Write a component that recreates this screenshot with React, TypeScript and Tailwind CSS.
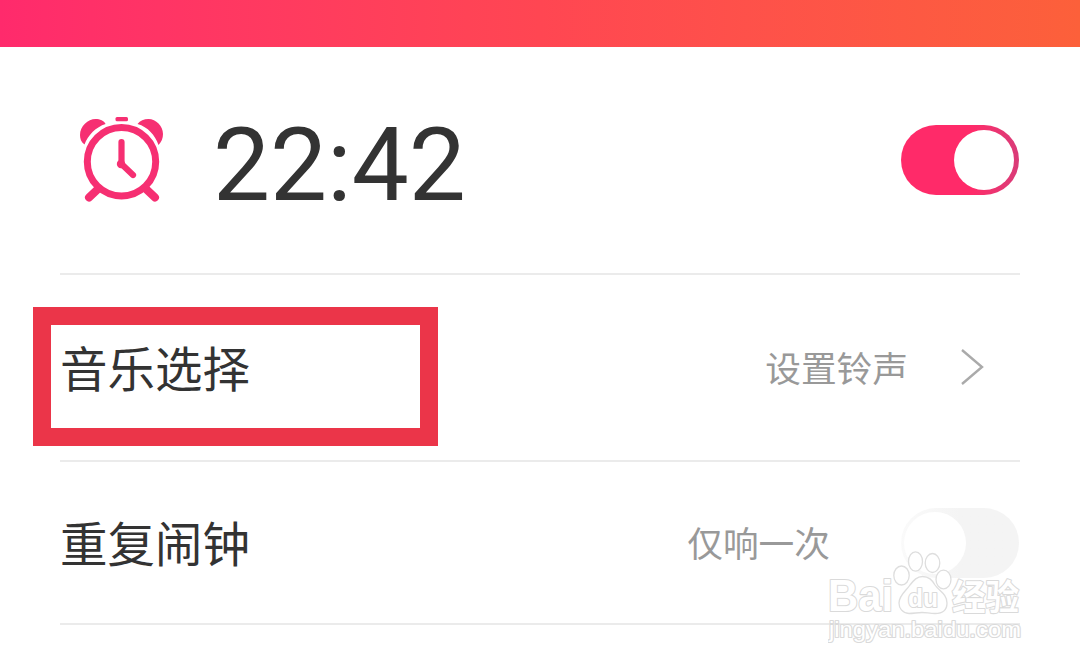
function AlarmIcon() {
  return (
    <svg className="block h-[90px] w-[90px]" viewBox="0 0 90 90" fill="none">
      <g fill="#f62f72">
        <path d="M8.500 29.500C5 27 4 23.500 4 20C4 11 12 4 19.500 4C24 4 28 5.800 29.600 9C20 12 12 20 8.500 29.500Z" />
        <path d="M82.500 30C79 20 72 12 61.500 9C64 5.800 68 4 72.500 4C80 4 87 11 87 19C87 23 85.500 27 82.500 30Z" />
        <rect x="39.500" y="2" width="12.500" height="4.200" rx="1.500" />
      </g>
      <g stroke="#f62f72" strokeLinecap="round">
        <circle cx="45.500" cy="46.700" r="34.200" strokeWidth="7" />
        <path d="M45.500 27V49L57 60" strokeWidth="6.200" strokeLinejoin="round" />
        <path d="M22 74L13 82.500M70 74L79 82.500" strokeWidth="8" />
      </g>
      <circle cx="45" cy="49" r="4.200" fill="#f62f72" />
    </svg>
  );
}

function Watermark() {
  return (
    <div className="absolute left-[828px] top-[548px] h-[100px] w-[200px]">
      <svg className="absolute inset-0 h-full w-full" viewBox="0 0 200 100">
        <g fill="#ffffff" stroke="#dedede" strokeWidth="1.300">
          <ellipse cx="73.500" cy="27.500" rx="7.700" ry="9.500" />
          <ellipse cx="87.500" cy="13.500" rx="7" ry="9.700" />
          <ellipse cx="104.500" cy="15" rx="7.300" ry="9.500" />
          <ellipse cx="115.500" cy="31.500" rx="7.500" ry="9.300" />
          <path d="M94.500 28.500C101 28.500 104 32 107 37C111 43 119 46 119 55C119 62 115 65.500 107 65.500C102 65.500 98 64.500 94 64.500C89 64.500 86 65.500 81 65.500C74 65 71 60 71 55C71 47 78 43 82 37C86 32 89 28.500 94.500 28.500Z" />
        </g>
        <g fill="#ffffff" stroke="#dadada" strokeWidth="2.200" paintOrder="stroke" strokeLinejoin="round" fontFamily="Liberation Sans, sans-serif" fontWeight="700">
          <text x="0" y="63" fontSize="44" textLength="65" lengthAdjust="spacingAndGlyphs">Bai</text>
          <text x="80" y="59" fontSize="25" textLength="30" lengthAdjust="spacingAndGlyphs">du</text>
          <text x="124" y="62" fontSize="35" textLength="67" lengthAdjust="spacingAndGlyphs" fontFamily="Noto Sans CJK SC, sans-serif">经验</text>
          <text x="1" y="89" fontSize="22.500" textLength="192" lengthAdjust="spacingAndGlyphs" fontWeight="400">jingyan.baidu.com</text>
        </g>
      </svg>
    </div>
  );
}

export default function App() {
  return (
    <div className="relative flex h-[667px] w-[1080px] flex-col overflow-hidden bg-white font-['Noto_Sans_CJK_SC',sans-serif] text-[#333333]">
      <header className="h-[47px] shrink-0 bg-linear-to-r from-[#ff2a6c] via-[#ff4652] to-[#fc603a]" />
      <main className="flex flex-col px-[60px]">
        <section className="flex h-[228px] items-center border-b-2 border-[#ebebeb] pl-[16px]">
          <AlarmIcon />
          <time className="ml-[47px] mt-[11px] font-[Roboto,sans-serif] text-[101.5px] leading-none">22:42</time>
          <button className="ml-auto mr-px flex h-[70px] w-[118px] items-center justify-end rounded-full bg-linear-to-r from-[#ff2a69] from-60% to-[#d93b78] pr-[5px]" aria-label="22:42">
            <span className="size-[60px] rounded-full bg-white" />
          </button>
        </section>
        <section className="flex h-[187px] items-center border-b-2 border-[#ebebeb]">
          <h2 className="mb-[2px] text-[47.5px] leading-none">音乐选择</h2>
          <span className="mb-[2px] ml-auto text-[35.7px] leading-none text-[#999999]">设置铃声</span>
          <svg className="mb-px ml-[51px] mr-[35px] h-[40px] w-[26px]" viewBox="0 0 26 40" fill="none" stroke="#aaaaaa" strokeWidth="2.400">
            <path d="M3 3L23 20L3 37" />
          </svg>
        </section>
        <section className="flex h-[163px] items-center border-b-2 border-[#ebebeb]">
          <h2 className="mb-[2px] text-[47.5px] leading-none">重复闹钟</h2>
          <span className="mb-[2px] ml-auto text-[35.7px] leading-none text-[#999999]">仅响一次</span>
          <button className="ml-[71px] mr-px flex h-[70px] w-[118px] items-center rounded-full bg-linear-to-r from-[#fafafa] to-[#f4f4f4] to-50% pl-[3px]" aria-label="重复闹钟">
            <span className="size-[62px] rounded-full bg-white" />
          </button>
        </section>
      </main>
      <div className="absolute left-[33px] top-[307px] h-[139px] w-[405px] border-[18px] border-[#eb3549]" />
      <Watermark />
    </div>
  );
}
